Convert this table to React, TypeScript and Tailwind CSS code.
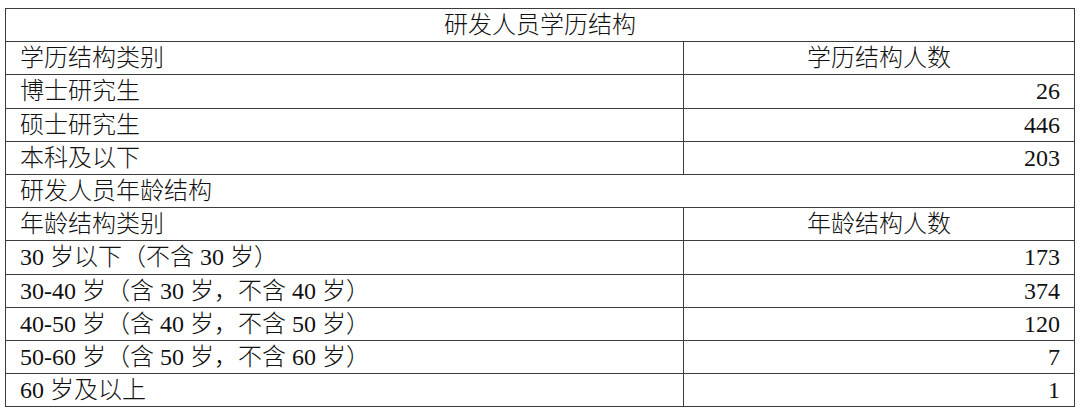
import React from 'react';

type Row =
  | { kind: 'title'; text: string; align: 'center' | 'left' }
  | { kind: 'head'; left: string; right: string }
  | { kind: 'data'; left: string; right: string };

const ROWS: Row[] = [
  { kind: 'title', text: '研发人员学历结构', align: 'center' },
  { kind: 'head', left: '学历结构类别', right: '学历结构人数' },
  { kind: 'data', left: '博士研究生', right: '26' },
  { kind: 'data', left: '硕士研究生', right: '446' },
  { kind: 'data', left: '本科及以下', right: '203' },
  { kind: 'title', text: '研发人员年龄结构', align: 'left' },
  { kind: 'head', left: '年龄结构类别', right: '年龄结构人数' },
  { kind: 'data', left: '30 岁以下（不含 30 岁）', right: '173' },
  { kind: 'data', left: '30-40 岁（含 30 岁，不含 40 岁）', right: '374' },
  { kind: 'data', left: '40-50 岁（含 40 岁，不含 50 岁）', right: '120' },
  { kind: 'data', left: '50-60 岁（含 50 岁，不含 60 岁）', right: '7' },
  { kind: 'data', left: '60 岁及以上', right: '1' },
];

const CELL = "border border-[#3c3c3c] px-[14px] py-0 leading-none align-middle";

const App: React.FC = () => {
  return (
    <div
      className="bg-white w-[1080px] h-[417px] pt-[8px] pl-[5px] text-[#111] text-[24px] font-light"
      style={{ fontFamily: '"Liberation Serif", "Noto Sans CJK SC", serif' }}
    >
      <table className="border-collapse w-[1069px] table-fixed">
        <colgroup>
          <col className="w-[678px]" />
          <col className="w-[391px]" />
        </colgroup>
        <tbody>
          {ROWS.map((row, i) => {
            if (row.kind === 'title') {
              return (
                <tr key={i} className="h-[33.2px]">
                  <td
                    colSpan={2}
                    className={`${CELL} ${row.align === 'center' ? 'text-center' : 'text-left'}`}
                  >
                    {row.text}
                  </td>
                </tr>
              );
            }
            return (
              <tr key={i} className="h-[33.2px]">
                <td className={`${CELL} text-left whitespace-nowrap`}>{row.left}</td>
                <td className={`${CELL} ${row.kind === 'head' ? 'text-center' : 'text-right'}`}>
                  {row.right}
                </td>
              </tr>
            );
          })}
        </tbody>
      </table>
    </div>
  );
};

export default App;
